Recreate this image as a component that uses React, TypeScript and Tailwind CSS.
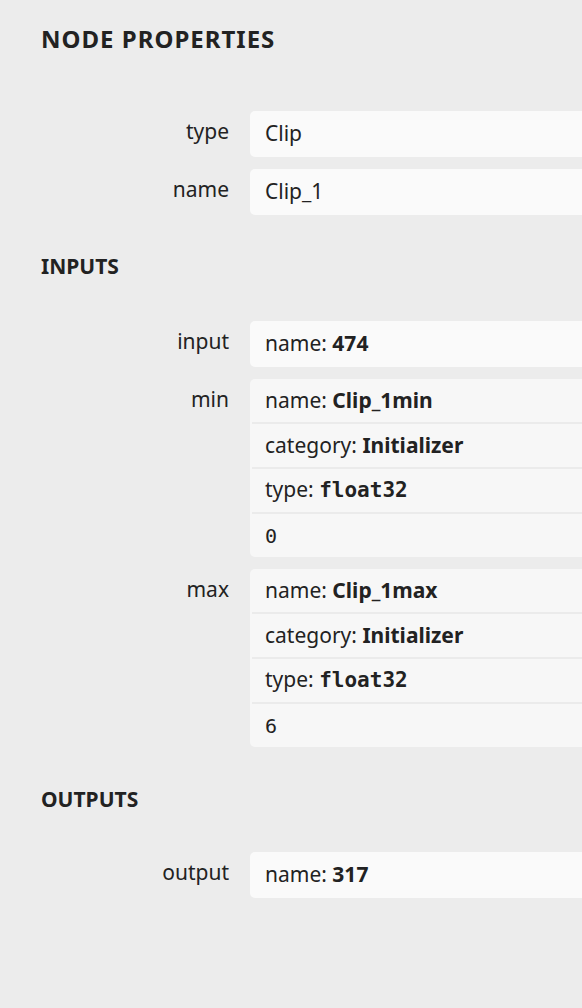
import React from "react";

type Part = { label?: string; value: string; mono?: boolean; plain?: boolean };

interface Prop {
  name: string;
  parts: Part[];
}

const attributes: Prop[] = [
  { name: "type", parts: [{ value: "Clip", plain: true }] },
  { name: "name", parts: [{ value: "Clip_1", plain: true }] },
];

const inputs: Prop[] = [
  { name: "input", parts: [{ label: "name", value: "474" }] },
  {
    name: "min",
    parts: [
      { label: "name", value: "Clip_1min" },
      { label: "category", value: "Initializer" },
      { label: "type", value: "float32", mono: true },
      { value: "0", mono: true, plain: true },
    ],
  },
  {
    name: "max",
    parts: [
      { label: "name", value: "Clip_1max" },
      { label: "category", value: "Initializer" },
      { label: "type", value: "float32", mono: true },
      { value: "6", mono: true, plain: true },
    ],
  },
];

const outputs: Prop[] = [{ name: "output", parts: [{ label: "name", value: "317" }] }];

const mono = "font-['DejaVu_Sans_Mono',monospace]";

function Line({ part }: { part: Part }) {
  if (part.plain) {
    return <span className={part.mono ? `${mono} text-[20px]` : ""}>{part.value}</span>;
  }
  return (
    <span>
      {part.label}:{" "}
      <span className={part.mono ? `${mono} font-bold text-[21px]` : "font-bold"}>{part.value}</span>
    </span>
  );
}

function Row({ prop }: { prop: Prop }) {
  const grouped = prop.parts.length > 1;
  return (
    <div className="flex items-start">
      <div className="w-[188px] shrink-0 text-right leading-[41px]">{prop.name}</div>
      <div
        className={`ml-[21px] w-[400px] shrink-0 rounded-[5px] ${grouped ? "bg-[#f7f7f7]" : "bg-[#fafafa]"}`}
      >
        {prop.parts.map((p, i) => (
          <div
            key={i}
            className={`flex items-center ${
              !grouped ? "h-[46px] pl-[15px]" : i > 0 ? "h-[45px] border-t-2 border-[#ebebeb] ml-[2px] pl-[13px]" : "h-[43px] pl-[15px]"
            }`}
          >
            <Line part={p} />
          </div>
        ))}
      </div>
    </div>
  );
}

function Section({ title, props, top, gap }: { title: string; props: Prop[]; top: string; gap: string }) {
  return (
    <div className={top}>
      <h2 className={`text-[21px] font-bold leading-[34px] ${gap}`}>{title}</h2>
      <div className="flex flex-col gap-[12px]">
        {props.map((p) => (
          <Row key={p.name} prop={p} />
        ))}
      </div>
    </div>
  );
}

export default function App() {
  return (
    <div className="w-[582px] h-[1008px] overflow-hidden bg-[#ececec] text-[#222] font-['Noto_Sans',sans-serif] text-[21px]">
      <div className="pl-[41px] pt-[22px]">
        <h1 className="text-[24px] font-bold tracking-[1px] leading-[34px] mb-[55px]">NODE PROPERTIES</h1>
        <div className="flex flex-col gap-[12px]">
          {attributes.map((p) => (
            <Row key={p.name} prop={p} />
          ))}
        </div>
        <Section title="INPUTS" props={inputs} top="mt-[34px]" gap="mb-[38px]" />
        <Section title="OUTPUTS" props={outputs} top="mt-[35px]" gap="mb-[36px]" />
      </div>
    </div>
  );
}
